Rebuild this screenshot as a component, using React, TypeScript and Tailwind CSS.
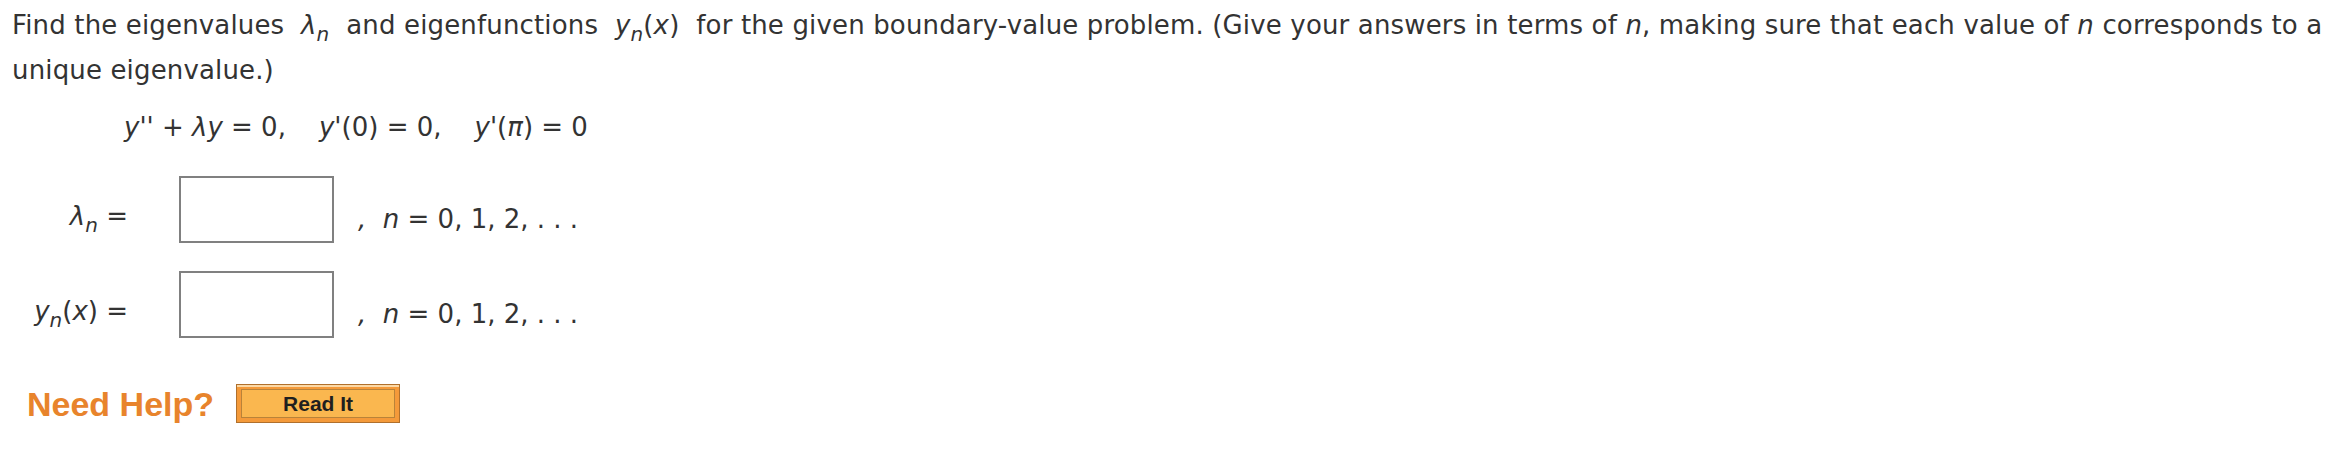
import React from "react"

const sans = { fontFamily: '"DejaVu Sans", Verdana, sans-serif' }
const arial = { fontFamily: '"Liberation Sans", Arial, sans-serif' }

/** italic math symbol with an optional subscript */
function Sym({ base, sub }: { base: string; sub?: string }) {
  return (
    <span className="italic">
      {base}
      {sub && <span className="text-[20px] relative top-[7px] leading-none">{sub}</span>}
    </span>
  )
}

function AnswerRow({ label, top }: { label: React.ReactNode; top: string }) {
  return (
    <div className={`flex items-center h-[67px] ${top}`}>
      <div className="w-[128px] text-right pt-[14px] whitespace-nowrap">{label}</div>
      <div className="ml-[51px] w-[155px] h-[67px] border-2 border-[#808080] bg-white" />
      <div className="ml-[24px] pt-[20px] whitespace-nowrap">
        <span className="italic">,</span>&nbsp; <span className="italic">n</span> = 0, 1, 2, . . .
      </div>
    </div>
  )
}

export default function App() {
  return (
    <div className="w-[2336px] h-[466px] bg-white text-[#333333] text-[26px]" style={sans}>
      <p className="pl-[12px] pt-[3px] leading-[45px] tracking-[0.15px]">
        Find the eigenvalues&nbsp; <Sym base="λ" sub="n" />&nbsp; and eigenfunctions&nbsp;{" "}
        <Sym base="y" sub="n" />
        (<span className="italic">x</span>)&nbsp; for the given boundary-value problem. (Give your answers in
        terms of <span className="italic">n</span>, making sure that each value of{" "}
        <span className="italic">n</span> corresponds to a unique eigenvalue.)
      </p>

      <div className="pl-[124px] mt-[12px] leading-[45px] whitespace-nowrap">
        <span className="italic">y''</span> + <span className="italic">λy</span> = 0,&nbsp;&nbsp;&nbsp;{" "}
        <span className="italic">y'</span>(0) = 0,&nbsp;&nbsp;&nbsp; <span className="italic">y'</span>(
        <span className="italic">π</span>) = 0
      </div>

      <AnswerRow
        top="mt-[26px]"
        label={
          <>
            <Sym base="λ" sub="n" /> =
          </>
        }
      />
      <AnswerRow
        top="mt-[28px]"
        label={
          <>
            <Sym base="y" sub="n" />(<span className="italic">x</span>) =
          </>
        }
      />

      <div className="flex items-center mt-[46px] pl-[27px]">
        <span className="text-[34px] font-bold text-[#e8842c] leading-none" style={arial}>
          Need Help?
        </span>
        <button
          className="ml-[22px] w-[164px] h-[39px] border border-[#b0702c] bg-[#f49a3a] p-[4px] shadow-[inset_0_2px_0_#fcd9a6]"
          style={arial}
        >
          <div className="h-full border border-[#b98339] bg-[#fab74f] flex items-center justify-center text-[21px] font-bold text-[#1f1f1f] leading-none">
            Read It
          </div>
        </button>
      </div>
    </div>
  )
}
